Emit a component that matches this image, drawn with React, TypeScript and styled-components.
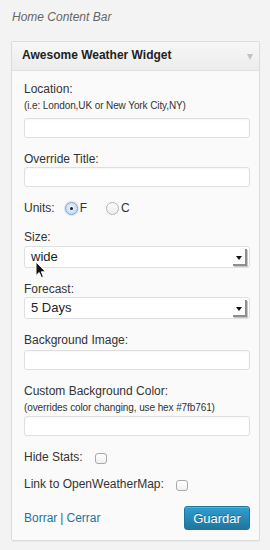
import React from 'react';
import styled, { createGlobalStyle } from 'styled-components';

const GlobalStyle = createGlobalStyle`
  html, body {
    margin: 0;
    padding: 0;
    background: #f3f3f3;
  }
  body {
    font-family: "Liberation Sans", Arial, sans-serif;
    color: #333;
    font-size: 12px;
  }
`;

const Page = styled.div`
  padding: 9px 10px 0 11px;
  width: 270px;
  height: 550px;
  box-sizing: border-box;
`;

const SidebarName = styled.div`
  font-style: italic;
  color: #666;
  font-size: 12px;
  line-height: 16px;
  padding-left: 1px;
  margin-bottom: 16px;
`;

const Panel = styled.div`
  border: 1px solid #dcdcdc;
  border-radius: 2px;
  background: #fafafa;
  box-shadow: 0 1px 1px rgba(0, 0, 0, 0.04);
`;

const PanelHeader = styled.div`
  display: flex;
  align-items: center;
  justify-content: space-between;
  height: 29px;
  padding: 0 6px 2px 10px;
  box-sizing: border-box;
  line-height: 27px;
  background: linear-gradient(to bottom, #f7f7f7, #ececec);
  border-bottom: 1px solid #dfdfdf;
`;

const PanelTitle = styled.h3`
  margin: 0;
  font-size: 12px;
  font-weight: bold;
  color: #222;
`;

const HeaderArrow = styled.span`
  width: 0;
  height: 0;
  border-left: 3.5px solid transparent;
  border-right: 3.5px solid transparent;
  border-top: 6px solid #c2c2c2;
  margin-top: 3px;
`;

const PanelBody = styled.div`
  position: relative;
  padding: 10px 9px 10px 12px;
`;

const Field = styled.div<{ $gap?: number }>`
  margin-top: ${p => (p.$gap ?? 13)}px;
  &:first-child {
    margin-top: 0;
  }
`;

const Label = styled.div`
  font-size: 12px;
  line-height: 16px;
  color: #333;
`;

const Hint = styled.div`
  font-size: 10px;
  line-height: 13px;
  letter-spacing: -0.1px;
  color: #333;
  margin-top: 2px;
`;

const TextInput = styled.input<{ $top?: number }>`
  display: block;
  width: 100%;
  box-sizing: border-box;
  height: 20px;
  margin: ${p => (p.$top ?? 0)}px 0 0 0;
  background: #fff;
  border: 1px solid #dfdfdf;
  border-radius: 3px;
  box-shadow: inset 0 1px 2px rgba(0, 0, 0, 0.04);
  font-family: inherit;
  font-size: 12px;
`;

const SelectBox = styled.div<{ $top?: number }>`
  display: flex;
  align-items: center;
  justify-content: space-between;
  height: 22px;
  margin-top: ${p => (p.$top ?? 0)}px;
  padding: 0 2px 0 6px;
  box-sizing: border-box;
  background: #fff;
  border: 1px solid #dfdfdf;
  border-radius: 3px;
  font-size: 13px;
  color: #222;
  line-height: 20px;
`;

const SelectArrow = styled.span`
  display: flex;
  align-items: center;
  justify-content: center;
  width: 12px;
  height: 15px;
  margin-top: 1px;
  background: #fff;
  border-right: 2px solid #8e8e8e;
  border-bottom: 2px solid #8e8e8e;
  box-shadow: 1px 1px 0 #c8c8c8;

  &::after {
    content: '';
    width: 0;
    height: 0;
    border-left: 3px solid transparent;
    border-right: 3px solid transparent;
    border-top: 4px solid #111;
    margin-top: 3px;
  }
`;

const InlineRow = styled.div<{ $gap?: number }>`
  display: flex;
  align-items: center;
  height: 16px;
  margin-top: ${p => (p.$gap ?? 13)}px;
  font-size: 12px;
  line-height: 16px;
`;

const RadioGroup = styled.div`
  display: flex;
  align-items: center;
  margin-left: 10px;
  gap: 19px;
`;

const RadioOption = styled.label`
  display: flex;
  align-items: center;
  gap: 2px;
`;

const Radio = styled.span<{ $checked?: boolean }>`
  display: flex;
  align-items: center;
  justify-content: center;
  width: 13px;
  height: 13px;
  box-sizing: border-box;
  border-radius: 50%;
  border: 1px solid ${p => (p.$checked ? '#7fa8d6' : '#b4b4b4')};
  background: ${p =>
    p.$checked
      ? 'radial-gradient(circle at 50% 40%, #eaf3fd, #b9d3f0)'
      : 'linear-gradient(to bottom, #fdfdfd, #ececec)'};
  box-shadow: ${p => (p.$checked ? '0 0 0 1px rgba(120,160,220,0.25)' : 'none')};

  &::after {
    content: '';
    display: ${p => (p.$checked ? 'block' : 'none')};
    width: 3px;
    height: 3px;
    border-radius: 50%;
    background: #222;
  }
`;

const Checkbox = styled.span<{ $left: number }>`
  display: inline-block;
  width: 12px;
  height: 11px;
  box-sizing: border-box;
  margin-left: ${p => p.$left}px;
  margin-top: 3px;
  border: 1px solid #a9a9a9;
  border-radius: 3px;
  background: linear-gradient(to bottom, #ffffff, #f0f0f0);
`;

const Footer = styled.div`
  display: flex;
  align-items: center;
  justify-content: space-between;
  margin-top: 14px;
`;

const Links = styled.div`
  font-size: 12px;
  color: #21759b;
`;

const Link = styled.a`
  color: #21759b;
  text-decoration: none;
`;

const Separator = styled.span`
  color: #3b5f73;
  padding: 0 3px;
`;

const SaveButton = styled.button`
  width: 66px;
  height: 24px;
  padding: 0;
  border: 1px solid #21759b;
  border-radius: 3px;
  background: linear-gradient(to bottom, #2e9fd2, #21759b);
  color: #fff;
  font-family: inherit;
  font-size: 13px;
  text-shadow: 0 -1px 0 rgba(0, 0, 0, 0.3);
  box-shadow: inset 0 1px 0 rgba(120, 200, 230, 0.5);
`;

const Cursor = styled.svg`
  position: absolute;
  left: 23px;
  top: 190px;
`;

const App: React.FC = () => {
  return (
    <>
      <GlobalStyle />
      <Page>
        <SidebarName>Home Content Bar</SidebarName>
        <Panel>
          <PanelHeader>
            <PanelTitle>Awesome Weather Widget</PanelTitle>
            <HeaderArrow />
          </PanelHeader>
          <PanelBody>
            <Field>
              <Label>Location:</Label>
              <Hint>(i.e: London,UK or New York City,NY)</Hint>
              <TextInput $top={6} />
            </Field>
            <Field>
              <Label>Override Title:</Label>
              <TextInput />
            </Field>
            <InlineRow>
              Units:
              <RadioGroup>
                <RadioOption>
                  <Radio $checked />F
                </RadioOption>
                <RadioOption>
                  <Radio />C
                </RadioOption>
              </RadioGroup>
            </InlineRow>
            <Field>
              <Label>Size:</Label>
              <SelectBox $top={1}>
                wide
                <SelectArrow />
              </SelectBox>
            </Field>
            <Field>
              <Label>Forecast:</Label>
              <SelectBox>
                5 Days
                <SelectArrow />
              </SelectBox>
            </Field>
            <Field>
              <Label>Background Image:</Label>
              <TextInput $top={2} />
            </Field>
            <Field>
              <Label>Custom Background Color:</Label>
              <Hint>(overrides color changing, use hex #7fb761)</Hint>
              <TextInput $top={2} />
            </Field>
            <InlineRow>
              Hide Stats:
              <Checkbox $left={12} />
            </InlineRow>
            <InlineRow $gap={11}>
              Link to OpenWeatherMap:
              <Checkbox $left={12} />
            </InlineRow>
            <Footer>
              <Links>
                <Link href="#">Borrar</Link>
                <Separator>|</Separator>
                <Link href="#">Cerrar</Link>
              </Links>
              <SaveButton>Guardar</SaveButton>
            </Footer>
            <Cursor width="12" height="18" viewBox="0 0 12 18">
              <path
                d="M1 1 L1 14.5 L4.2 11.5 L6.4 16.6 L8.4 15.7 L6.3 10.8 L10.6 10.8 Z"
                fill="#111"
                stroke="#fff"
                strokeWidth="1"
                strokeLinejoin="round"
              />
            </Cursor>
          </PanelBody>
        </Panel>
      </Page>
    </>
  );
};

export default App;
